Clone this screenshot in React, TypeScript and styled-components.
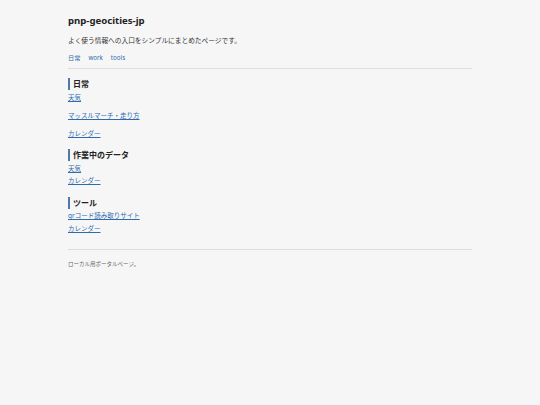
import React from "react";
import styled, { createGlobalStyle } from "styled-components";

const GlobalStyle = createGlobalStyle`
  html, body {
    margin: 0;
    padding: 0;
    background: #f6f6f6;
    color: #222;
    font-family: "Noto Sans", "Noto Sans CJK JP", sans-serif;
  }
`;

const Page = styled.div`
  width: 404px;
  margin: 0 auto;
  padding-top: 13px;
`;

const Header = styled.header`
  border-bottom: 1px solid #dedede;
  padding-bottom: 5px;
`;

const Title = styled.h1`
  font-size: 9.6px;
  font-weight: 700;
  margin: 0;
  line-height: 15px;
`;

const Lead = styled.p`
  font-size: 6.7px;
  margin: 8px 0 0;
  line-height: 10px;
  color: #333;
`;

const Nav = styled.nav`
  display: flex;
  gap: 8px;
  margin-top: 7px;
  font-size: 6.2px;
  line-height: 10px;
  a {
    color: #2f6aad;
    text-decoration: none;
  }
`;

const Section = styled.section`
  margin-top: 9px;
  & + & {
    margin-top: 10.5px;
  }
`;

const Heading = styled.h2`
  font-size: 8px;
  font-weight: 700;
  margin: 0;
  line-height: 12px;
  border-left: 2px solid #4f79a8;
  padding-left: 3px;
`;

const LinkList = styled.ul<{ $gap: number }>`
  list-style: none;
  margin: 2.5px 0 0;
  padding: 0;
  display: flex;
  flex-direction: column;
  gap: ${(p) => p.$gap}px;
  font-size: 6.5px;
  line-height: 10px;
  a {
    color: #2f6aad;
    text-decoration: underline;
  }
`;

const Footer = styled.footer`
  margin-top: 15px;
  border-top: 1px solid #dedede;
  padding-top: 10px;
  font-size: 5.5px;
  line-height: 8px;
  color: #666;
`;

const sections = [
  { title: "日常", gap: 8, links: ["天気", "マッスルマーチ・走り方", "カレンダー"] },
  { title: "作業中のデータ", gap: 2.7, links: ["天気", "カレンダー"] },
  { title: "ツール", gap: 2.7, links: ["qrコード読み取りサイト", "カレンダー"] },
];

export default function App() {
  return (
    <Page>
      <GlobalStyle />
      <Header>
        <Title>pnp-geocities-jp</Title>
        <Lead>よく使う情報への入口をシンプルにまとめたページです。</Lead>
        <Nav>
          <a href="#">日常</a>
          <a href="#">work</a>
          <a href="#">tools</a>
        </Nav>
      </Header>
      {sections.map((s) => (
        <Section key={s.title}>
          <Heading>{s.title}</Heading>
          <LinkList $gap={s.gap}>
            {s.links.map((l) => (
              <li key={l}>
                <a href="#">{l}</a>
              </li>
            ))}
          </LinkList>
        </Section>
      ))}
      <Footer>ローカル用ポータルページ。</Footer>
    </Page>
  );
}
